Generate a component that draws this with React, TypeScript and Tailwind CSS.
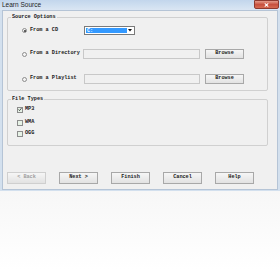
import React from "react";

const mono = { fontFamily: '"Liberation Mono", monospace' };

const Radio = ({ checked }: { checked?: boolean }) => (
  <span className="w-[5px] h-[5px] rounded-full border border-[#8c8c8c] bg-[#f4f4f4] flex items-center justify-center shrink-0">
    {checked && <span className="w-[2px] h-[2px] rounded-full bg-[#333]" />}
  </span>
);

const Check = ({ checked }: { checked?: boolean }) => (
  <span className="w-[6px] h-[6px] border border-[#8c8c8c] bg-[#e6f2e6] flex items-center justify-center shrink-0">
    {checked && (
      <svg viewBox="0 0 6 6" className="w-[5px] h-[5px]">
        <path d="M0.8 3 L2.3 4.6 L5.2 1" stroke="#222" strokeWidth="1.2" fill="none" />
      </svg>
    )}
  </span>
);

const Btn = ({ label, disabled }: { label: string; disabled?: boolean }) => (
  <div
    className={`w-[39px] h-[12px] border border-[#a8a8a8] bg-gradient-to-b from-[#f6f6f6] to-[#e2e2e2] flex items-center justify-center text-[5.2px] font-bold ${
      disabled ? "text-[#a0a0a0] border-[#cfcfcf]" : "text-[#222]"
    }`}
    style={mono}
  >
    {label}
  </div>
);

const Browse = () => (
  <div
    className="w-[39px] h-[10px] border border-[#a8a8a8] bg-gradient-to-b from-[#f6f6f6] to-[#e2e2e2] flex items-center justify-center text-[5.2px] font-bold text-[#222]"
    style={mono}
  >
    Browse
  </div>
);

export default function App() {
  return (
    <div className="w-[280px] h-[270px] bg-white overflow-hidden">
      {/* window */}
      <div className="w-[280px] h-[191px] flex flex-col bg-[#d3e0ee]">
        {/* title bar */}
        <div className="h-[10px] flex items-start justify-between bg-gradient-to-b from-[#c2d6ec] to-[#dae6f3]">
          <span
            className="pl-[2px] text-[6.5px] leading-[10px] text-[#1e1e1e]"
            style={{ fontFamily: '"Liberation Sans", sans-serif' }}
          >
            Learn Source
          </span>
          <div className="w-[25px] h-[9px] mr-[1px] rounded-b-[2px] border border-[#8e3a30] bg-gradient-to-b from-[#e49a8a] via-[#c8513f] to-[#d66a52] flex items-center justify-center">
            <svg viewBox="0 0 6 5" className="w-[5px] h-[4px]">
              <path d="M0.8 0.6 L5.2 4.4 M5.2 0.6 L0.8 4.4" stroke="#fff" strokeWidth="1.3" />
            </svg>
          </div>
        </div>
        {/* body */}
        <div className="flex-1 flex px-[2px] pb-[1px]">
          <div
            className="flex-1 bg-[#f0f0f0] border border-[#b5c4d6] pl-[4px] pt-[3px] text-[5.2px] font-bold text-[#1a1a1a]"
            style={mono}
          >
            <fieldset className="w-[261px] h-[77px] border border-[#d0d0d0] rounded-[2px] px-[14px]">
              <legend className="ml-[-11px] px-[1px] leading-[6px]">Source Options</legend>
              <div className="flex items-center h-[9px] mt-[6px]">
                <Radio checked />
                <span className="ml-[3px] w-[54px]">From a CD</span>
                <div className="w-[51px] h-[9px] border border-[#7a7a7a] bg-white flex items-center p-[1px]">
                  <div className="flex-1 h-full bg-[#3399ff] text-white leading-[6px] pl-[1px]">C:</div>
                  <div className="w-[6px] h-full flex items-center justify-center">
                    <svg viewBox="0 0 4 3" className="w-[4px] h-[3px]">
                      <path d="M0 0 H4 L2 2.5 Z" fill="#111" />
                    </svg>
                  </div>
                </div>
              </div>
              <div className="flex items-center h-[10px] mt-[14px]">
                <Radio />
                <span className="ml-[3px] w-[53px]">From a Directory</span>
                <div className="w-[117px] h-[10px] border border-[#c8c8c8] bg-[#f0f0f0]" />
                <div className="ml-[5px]">
                  <Browse />
                </div>
              </div>
              <div className="flex items-center h-[10px] mt-[15px]">
                <Radio />
                <span className="ml-[3px] w-[54px]">From a Playlist</span>
                <div className="w-[116px] h-[10px] border border-[#c8c8c8] bg-[#f0f0f0]" />
                <div className="ml-[5px]">
                  <Browse />
                </div>
              </div>
            </fieldset>
            <fieldset className="w-[261px] h-[50px] mt-[5px] border border-[#d0d0d0] rounded-[2px] px-[9px]">
              <legend className="ml-[-6px] px-[1px] leading-[6px]">File Types</legend>
              <div className="flex items-center h-[7px] mt-[4px]">
                <Check checked />
                <span className="ml-[2px]">MP3</span>
              </div>
              <div className="flex items-center h-[7px] mt-[6px]">
                <Check />
                <span className="ml-[2px]">WMA</span>
              </div>
              <div className="flex items-center h-[7px] mt-[4px]">
                <Check />
                <span className="ml-[2px]">OGG</span>
              </div>
            </fieldset>
            <div className="flex gap-[13px] mt-[26px]">
              <Btn label="< Back" disabled />
              <Btn label="Next >" />
              <Btn label="Finish" />
              <Btn label="Cancel" />
              <Btn label="Help" />
            </div>
          </div>
        </div>
      </div>
      {/* faded reflection below window */}
      <div className="h-[79px] bg-gradient-to-b from-[#f7f7f7] to-white" />
    </div>
  );
}
